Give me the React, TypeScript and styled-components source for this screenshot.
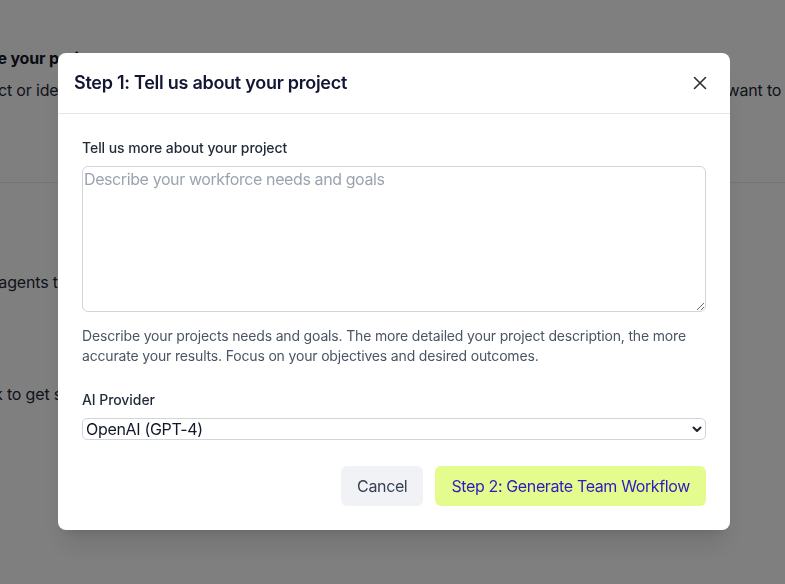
import { useState } from "react"
import styled, { createGlobalStyle } from "styled-components"

const GlobalStyle = createGlobalStyle`
  html, body {
    margin: 0;
    padding: 0;
    height: 100%;
    overflow: hidden;
    font-family: Inter, "Noto Sans", sans-serif;
    background: #ffffff;
  }
  * {
    box-sizing: border-box;
  }
`

export default function App() {
  const [description, setDescription] = useState("")
  const [provider, setProvider] = useState("openai")

  return (
    <>
      <GlobalStyle />
      <Page>
        <Intro>
          <BgHeading $indent={-62}>Describe your project</BgHeading>
          <BgText $indent={-78}>
            <span>Your project or idea</span>
            <span>want to achieve</span>
          </BgText>
        </Intro>
        <Divider />
        <Steps>
          <BgText $indent={-21}>
            <span>AI agents to help you</span>
          </BgText>
          <BgText $indent={-34} $gap={88}>
            <span>Click to get started</span>
          </BgText>
        </Steps>
      </Page>

      <Overlay>
        <Dialog>
          <Header>
            <Title>Step 1: Tell us about your project</Title>
            <CloseButton aria-label="Close">
              <svg width="16" height="16" viewBox="0 0 16 16" fill="none">
                <path
                  d="M2.5 2.5l11 11M13.5 2.5l-11 11"
                  stroke="#2b2f36"
                  strokeWidth="1.6"
                  strokeLinecap="round"
                />
              </svg>
            </CloseButton>
          </Header>

          <Body>
            <Label htmlFor="project">Tell us more about your project</Label>
            <TextArea
              id="project"
              value={description}
              onChange={(e) => setDescription(e.target.value)}
              placeholder="Describe your workforce needs and goals"
            />
            <Hint>
              Describe your projects needs and goals. The more detailed your
              project description, the more accurate your results. Focus on
              your objectives and desired outcomes.
            </Hint>

            <Field>
              <Label htmlFor="provider">AI Provider</Label>
              <SelectWrap>
                <Select
                  id="provider"
                  value={provider}
                  onChange={(e) => setProvider(e.target.value)}
                >
                  <option value="openai">OpenAI (GPT-4)</option>
                  <option value="anthropic">Anthropic (Claude)</option>
                </Select>
                <Chevron width="12" height="12" viewBox="0 0 12 12" fill="none">
                  <path
                    d="M2.5 4.5L6 8l3.5-3.5"
                    stroke="#1f2328"
                    strokeWidth="2"
                    strokeLinecap="round"
                    strokeLinejoin="round"
                  />
                </Chevron>
              </SelectWrap>
            </Field>

            <Actions>
              <Button $variant="secondary">Cancel</Button>
              <Button $variant="primary">Step 2: Generate Team Workflow</Button>
            </Actions>
          </Body>
        </Dialog>
      </Overlay>
    </>
  )
}

const Page = styled.div`
  height: 100vh;
  overflow: hidden;
  color: #111827;
`

const Intro = styled.div`
  display: flex;
  flex-direction: column;
  gap: 8px;
  padding-top: 46px;
  height: 182px;
`

const BgHeading = styled.h2<{ $indent: number }>`
  margin: 0 0 0 ${({ $indent }) => $indent}px;
  font-size: 16px;
  line-height: 24px;
  font-weight: 700;
  letter-spacing: -0.01em;
  white-space: nowrap;
`

const BgText = styled.p<{ $indent: number; $gap?: number }>`
  display: flex;
  justify-content: space-between;
  margin: ${({ $gap }) => $gap || 0}px 0 0 ${({ $indent }) => $indent}px;
  font-size: 16px;
  line-height: 24px;
  letter-spacing: -0.01em;
  color: #1f2937;
  white-space: nowrap;

  span:last-child:not(:first-child) {
    margin-right: -58px;
  }
`

const Divider = styled.hr`
  margin: 0;
  border: 0;
  border-top: 1px solid #e5e7eb;
`

const Steps = styled.div`
  display: flex;
  flex-direction: column;
  padding-top: 87px;
`

const Overlay = styled.div`
  position: fixed;
  inset: 0;
  background: rgba(0, 0, 0, 0.5);
  display: flex;
  justify-content: center;
  align-items: flex-start;
  padding: 53px 0 0 3px;
`

const Dialog = styled.div`
  width: 672px;
  flex-shrink: 0;
  background: #ffffff;
  border-radius: 8px;
  box-shadow: 0 20px 25px -5px rgba(0, 0, 0, 0.1),
    0 8px 10px -6px rgba(0, 0, 0, 0.1);
`

const Header = styled.div`
  display: flex;
  align-items: center;
  justify-content: space-between;
  padding: 16px 20px 16px 16px;
  border-bottom: 1px solid #e5e7eb;
`

const Title = styled.h3`
  margin: 0;
  font-size: 18px;
  line-height: 28px;
  font-weight: 600;
  letter-spacing: -0.015em;
  color: #111633;
`

const CloseButton = styled.button`
  display: flex;
  align-items: center;
  justify-content: center;
  width: 20px;
  height: 20px;
  padding: 0;
  border: 0;
  background: transparent;
  cursor: pointer;
`

const Body = styled.div`
  display: flex;
  flex-direction: column;
  padding: 24px;
`

const Label = styled.label`
  display: block;
  margin-bottom: 8px;
  font-size: 14px;
  line-height: 20px;
  font-weight: 500;
  letter-spacing: -0.005em;
  color: #1f2937;
`

const TextArea = styled.textarea`
  display: block;
  width: 100%;
  height: 146px;
  padding: 0 1px;
  border: 1px solid #d1d5db;
  border-radius: 6px;
  font-family: Inter, "Noto Sans", sans-serif;
  font-size: 16px;
  line-height: 24px;
  letter-spacing: -0.025em;
  color: #111827;
  resize: vertical;
  outline: none;

  &::placeholder {
    color: #9ca3af;
  }
`

const Hint = styled.p`
  margin: 14px 0 0;
  font-size: 14px;
  line-height: 20px;
  letter-spacing: -0.012em;
  color: #4b5563;
`

const Field = styled.div`
  margin-top: 24px;
`

const SelectWrap = styled.div`
  position: relative;
`

const Select = styled.select`
  display: block;
  width: 100%;
  height: 22px;
  padding: 0 24px 0 3px;
  border: 1px solid #d1d5db;
  border-radius: 5px;
  background: #ffffff;
  font-family: Inter, "Noto Sans", sans-serif;
  font-size: 16px;
  line-height: 20px;
  letter-spacing: -0.02em;
  color: #111827;
  appearance: none;
  outline: none;
`

const Chevron = styled.svg`
  position: absolute;
  right: 3px;
  top: 5px;
  pointer-events: none;
`

const Actions = styled.div`
  display: flex;
  justify-content: flex-end;
  gap: 12px;
  margin-top: 26px;
`

const Button = styled.button<{ $variant: "primary" | "secondary" }>`
  height: 40px;
  padding: 0 16px;
  border: 0;
  border-radius: 6px;
  font-family: Inter, "Noto Sans", sans-serif;
  font-size: 16px;
  line-height: 24px;
  letter-spacing: -0.023em;
  cursor: pointer;
  background: ${({ $variant }) =>
    $variant === "primary" ? "#e3fc8d" : "#f1f2f5"};
  color: ${({ $variant }) => ($variant === "primary" ? "#3118c2" : "#374151")};
`
